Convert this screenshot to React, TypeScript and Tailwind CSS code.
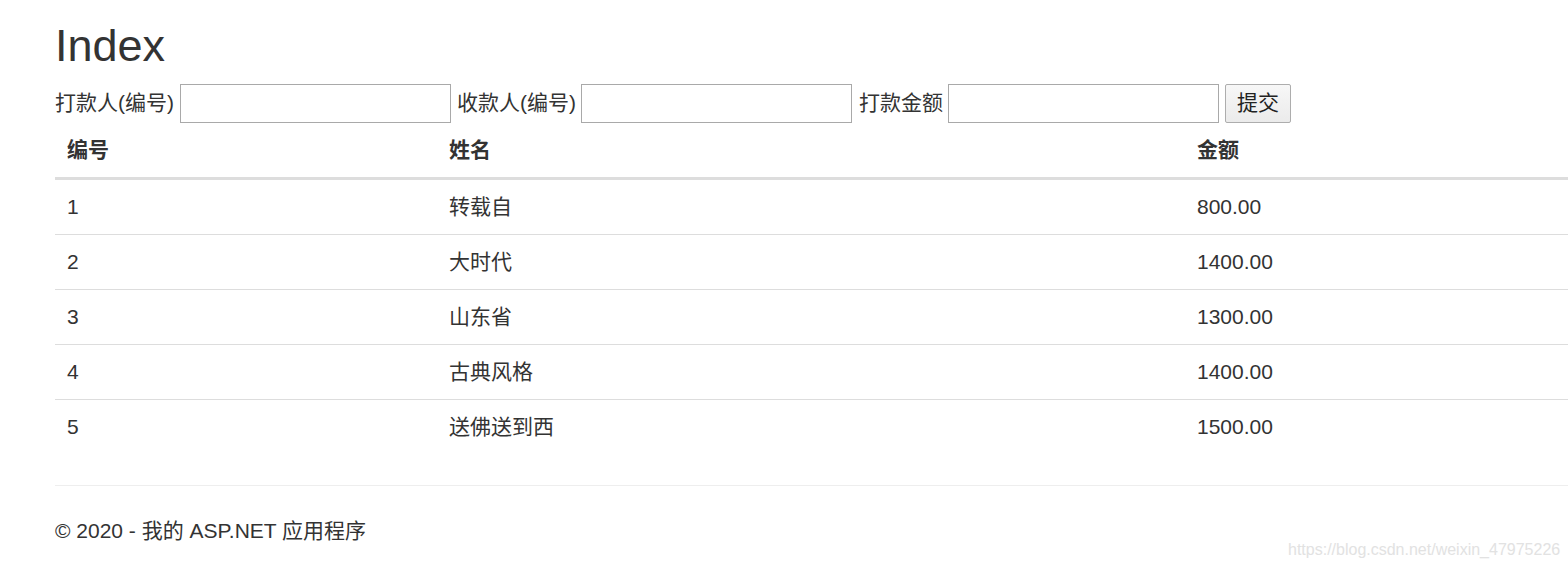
const rows = [
  { id: 1, name: "转载自", amount: "800.00" },
  { id: 2, name: "大时代", amount: "1400.00" },
  { id: 3, name: "山东省", amount: "1300.00" },
  { id: 4, name: "古典风格", amount: "1400.00" },
  { id: 5, name: "送佛送到西", amount: "1500.00" },
];

export default function App() {
  return (
    <div
      className="relative min-h-[569px] overflow-hidden bg-white text-[21px] leading-[30px] text-[#333]"
      style={{ fontFamily: '"Liberation Sans", "Noto Sans CJK SC", sans-serif' }}
    >
      <div className="w-[1513px] ml-[55px]">
        <h2 className="mt-[21px] mb-[13px] text-[45px] leading-[49.5px] font-normal">Index</h2>

        <form className="flex items-center h-[39px]" onSubmit={(e) => e.preventDefault()}>
          <span>打款人(编号)</span>
          <input className="ml-[6px] w-[271px] h-[39px] border border-[#a9a9a9] outline-none" />
          <span className="ml-[6px]">收款人(编号)</span>
          <input className="ml-[5px] w-[271px] h-[39px] border border-[#a9a9a9] outline-none" />
          <span className="ml-[7px]">打款金额</span>
          <input className="ml-[5px] w-[271px] h-[39px] border border-[#a9a9a9] outline-none" />
          <button
            type="submit"
            className="ml-[6px] w-[66px] h-[39px] border border-[#adadad] rounded-[2px] bg-gradient-to-b from-[#f7f7f7] to-[#ebebeb] text-[21px] text-[#222]"
          >
            提交
          </button>
        </form>

        <table className="table-fixed w-[1513px] border-collapse">
          <colgroup>
            <col className="w-[382px]" />
            <col className="w-[748px]" />
            <col />
          </colgroup>
          <thead>
            <tr>
              <th className="text-left font-bold px-[12px] py-[12px] border-b-[3px] border-[#ddd]">编号</th>
              <th className="text-left font-bold px-[12px] py-[12px] border-b-[3px] border-[#ddd]">姓名</th>
              <th className="text-left font-bold px-[12px] py-[12px] border-b-[3px] border-[#ddd]">金额</th>
            </tr>
          </thead>
          <tbody>
            {rows.map((r) => (
              <tr key={r.id}>
                <td className="px-[12px] py-[12px] border-t border-[#ddd]">{r.id}</td>
                <td className="px-[12px] py-[12px] border-t border-[#ddd]">{r.name}</td>
                <td className="px-[12px] py-[12px] border-t border-[#ddd]">{r.amount}</td>
              </tr>
            ))}
          </tbody>
        </table>

        <hr className="mt-[31px] mb-[30px] border-0 border-t border-[#eee]" />
        <footer>
          <p>© 2020 - 我的 ASP.NET 应用程序</p>
        </footer>
      </div>

      <div className="absolute left-[1288px] top-[538px] text-[16px] leading-[24px] text-[#e2e2e2]">
        https://blog.csdn.net/weixin_47975226
      </div>
    </div>
  );
}
